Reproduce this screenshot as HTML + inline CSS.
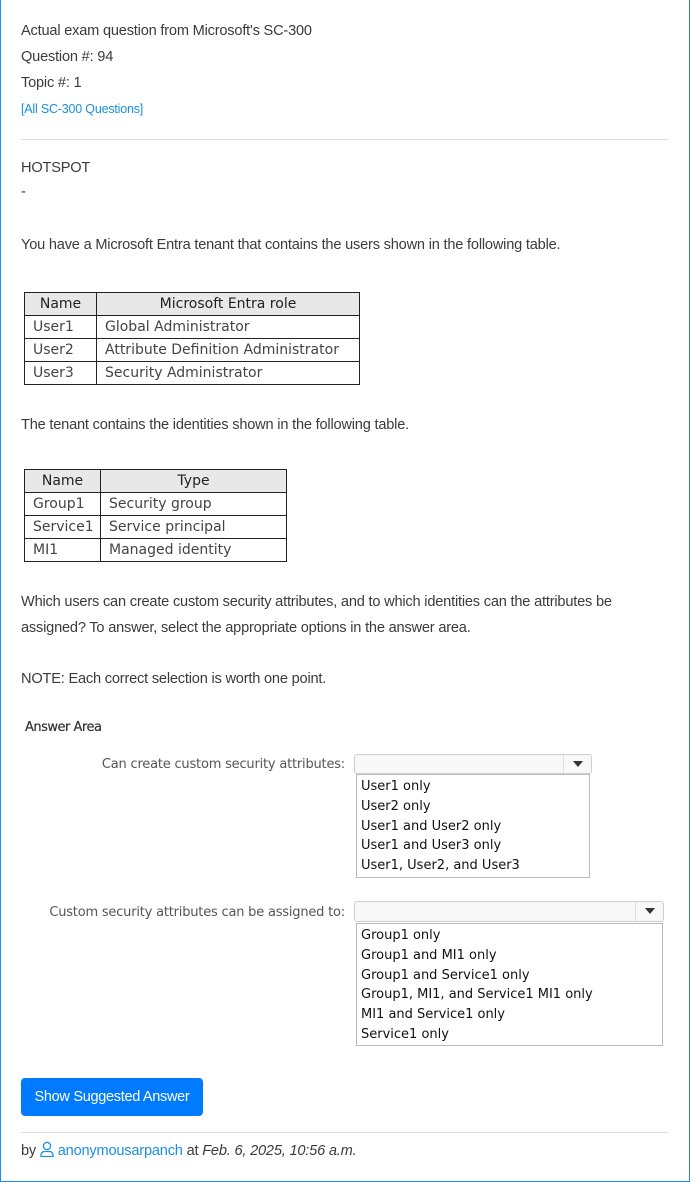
<!DOCTYPE html>
<html><head><meta charset="utf-8"><style>
*{margin:0;padding:0;box-sizing:border-box}
body{width:690px;height:1182px;background:#fff;font-family:"Liberation Sans",sans-serif;color:#3b3b3b;position:relative;overflow:hidden}
.frame{position:absolute;left:0;top:0;width:690px;height:1182px;border:1px solid #1a8fe3;border-top:none}
.t{position:absolute;left:21px;font-size:14.6px;white-space:nowrap;letter-spacing:-0.2px}
.hr{position:absolute;left:21px;width:648px;height:1px;background:#dedede}
table{position:absolute;border-collapse:collapse;font-family:"DejaVu Sans",sans-serif;font-size:14px;color:#444}
td{border:1.5px solid #222;height:22.5px;padding:0 0 0 8px;line-height:22px}
tr.h td{background:#e8e8e8;text-align:center;padding:0;color:#222}
.ms{position:absolute;font-family:"DejaVu Sans",sans-serif;font-size:13px;color:#222;white-space:nowrap}
.lbl{position:absolute;font-family:"DejaVu Sans",sans-serif;font-size:13px;color:#555;white-space:nowrap;text-align:right;letter-spacing:-0.2px}
.box{position:absolute;border:1px solid #cfcfcf;border-radius:3px;background:#f8f8f8}
.arr{position:absolute;top:0;right:0;height:100%;width:28px;border-left:1px solid #ddd}
.arr:after{content:"";position:absolute;left:9px;top:6px;border-left:5px solid transparent;border-right:5px solid transparent;border-top:6px solid #333}
.list{position:absolute;border:1px solid #bbb;background:#fff}
.list div{height:19.8px;line-height:22px;padding-left:4px;font-family:"DejaVu Sans",sans-serif;font-size:13px;color:#111}
</style></head><body>
<div class="frame"></div>
<div class="t" style="top:23px">Actual exam question from Microsoft's SC-300</div>
<div class="t" style="top:49px">Question #: 94</div>
<div class="t" style="top:75px">Topic #: 1</div>
<div class="t" style="top:102px;font-size:12.5px;color:#1a8fe3">[All SC-300 Questions]</div>
<div class="hr" style="top:139px"></div>
<div class="t" style="top:160px">HOTSPOT</div>
<div class="t" style="top:184px">-</div>
<div class="t" style="top:237px">You have a Microsoft Entra tenant that contains the users shown in the following table.</div>
<table style="left:24px;top:292px;width:336px">
<tr class="h"><td style="width:72px">Name</td><td>Microsoft Entra role</td></tr>
<tr><td>User1</td><td>Global Administrator</td></tr>
<tr><td>User2</td><td>Attribute Definition Administrator</td></tr>
<tr><td>User3</td><td>Security Administrator</td></tr>
</table>
<div class="t" style="top:417px">The tenant contains the identities shown in the following table.</div>
<table style="left:24px;top:469px;width:263px">
<tr class="h"><td style="width:76px">Name</td><td>Type</td></tr>
<tr><td>Group1</td><td>Security group</td></tr>
<tr><td style="padding-left:8px">Service1</td><td>Service principal</td></tr>
<tr><td>MI1</td><td>Managed identity</td></tr>
</table>
<div class="t" style="top:594px">Which users can create custom security attributes, and to which identities can the attributes be</div>
<div class="t" style="top:620px">assigned? To answer, select the appropriate options in the answer area.</div>
<div class="t" style="top:671px">NOTE: Each correct selection is worth one point.</div>
<div class="ms" style="left:25px;top:720px;font-size:13px;letter-spacing:-0.5px;color:#333;text-shadow:0 0 0.4px #333">Answer Area</div>
<div class="lbl" style="left:60px;width:285px;top:757px">Can create custom security attributes:</div>
<div class="box" style="left:354px;top:754px;width:238px;height:20px"><div class="arr"></div></div>
<div class="list" style="left:356px;top:774px;width:234px;height:104px;padding-top:1px">
<div>User1 only</div><div>User2 only</div><div>User1 and User2 only</div><div>User1 and User3 only</div><div>User1, User2, and User3</div></div>
<div class="lbl" style="left:20px;width:325px;top:905px">Custom security attributes can be assigned to:</div>
<div class="box" style="left:354px;top:901px;width:310px;height:21px"><div class="arr"></div></div>
<div class="list" style="left:356px;top:923px;width:307px;height:123px;padding-top:1px">
<div>Group1 only</div><div>Group1 and MI1 only</div><div>Group1 and Service1 only</div><div>Group1, MI1, and Service1 MI1 only</div><div>MI1 and Service1 only</div><div>Service1 only</div></div>
<div style="position:absolute;left:21px;top:1078px;width:182px;height:38px;background:#007bff;border-radius:4px;color:#fff;font-size:14.5px;line-height:38px;text-align:center;letter-spacing:-0.3px">Show Suggested Answer</div>
<div class="hr" style="top:1132px"></div>
<div class="t" style="top:1141px">by <svg width="14" height="16" viewBox="0 0 14 16" style="vertical-align:-2px"><circle cx="7" cy="5" r="3.6" fill="none" stroke="#1a8fe3" stroke-width="1.3"/><path d="M1 15.5v-1.5a3.5 3.5 0 0 1 3.5-3.5h5a3.5 3.5 0 0 1 3.5 3.5v1.5z" fill="none" stroke="#1a8fe3" stroke-width="1.3"/></svg> <span style="color:#1a8fe3">anonymousarpanch</span> at <i>Feb. 6, 2025, 10:56 a.m.</i></div>
</body></html>
